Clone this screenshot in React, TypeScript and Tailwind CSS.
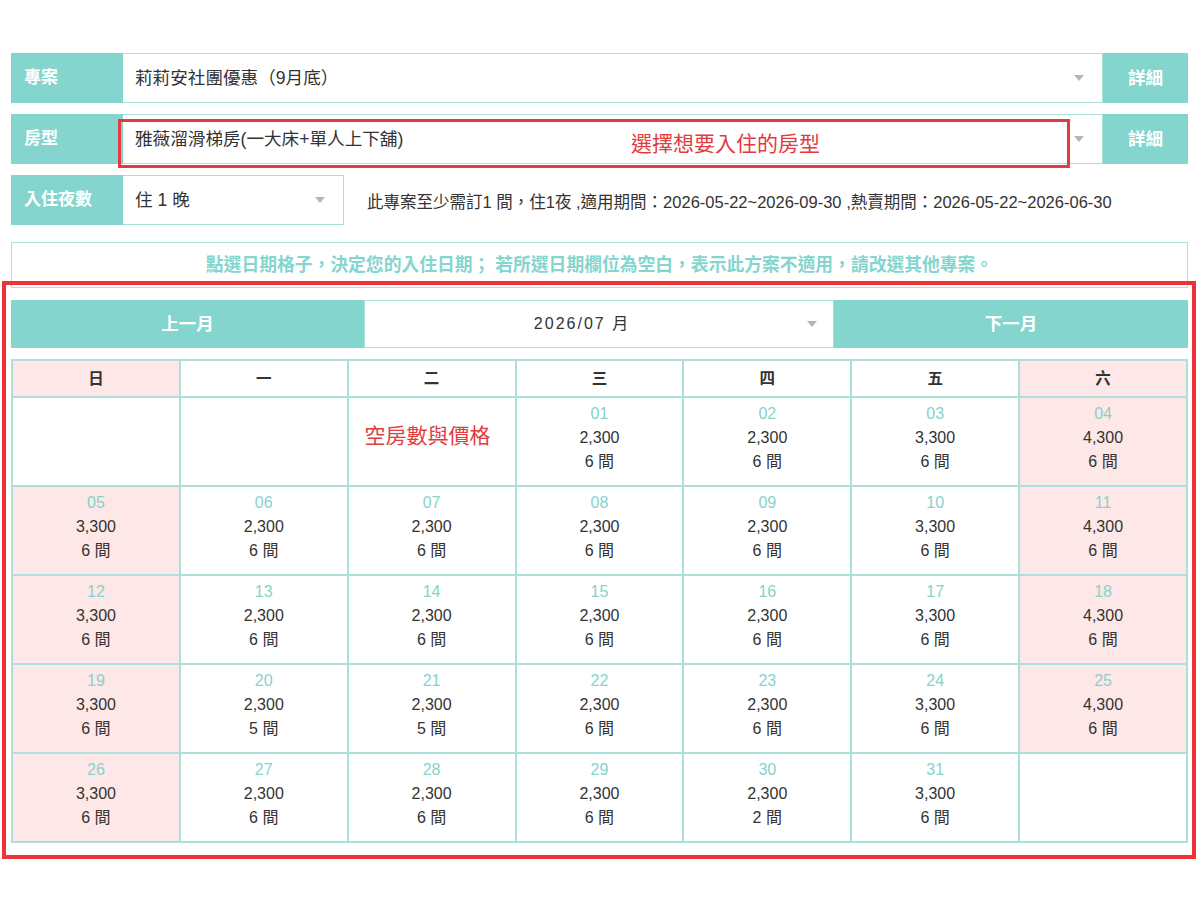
import React from 'react';

const font = { fontFamily: '"Liberation Sans", "Noto Sans CJK TC", sans-serif' };

interface Day {
  d: string;
  price: string;
  rooms: number;
}

const weeks: (Day | null | 'note')[][] = [
  [null, null, 'note', { d: '01', price: '2,300', rooms: 6 }, { d: '02', price: '2,300', rooms: 6 }, { d: '03', price: '3,300', rooms: 6 }, { d: '04', price: '4,300', rooms: 6 }],
  [{ d: '05', price: '3,300', rooms: 6 }, { d: '06', price: '2,300', rooms: 6 }, { d: '07', price: '2,300', rooms: 6 }, { d: '08', price: '2,300', rooms: 6 }, { d: '09', price: '2,300', rooms: 6 }, { d: '10', price: '3,300', rooms: 6 }, { d: '11', price: '4,300', rooms: 6 }],
  [{ d: '12', price: '3,300', rooms: 6 }, { d: '13', price: '2,300', rooms: 6 }, { d: '14', price: '2,300', rooms: 6 }, { d: '15', price: '2,300', rooms: 6 }, { d: '16', price: '2,300', rooms: 6 }, { d: '17', price: '3,300', rooms: 6 }, { d: '18', price: '4,300', rooms: 6 }],
  [{ d: '19', price: '3,300', rooms: 6 }, { d: '20', price: '2,300', rooms: 5 }, { d: '21', price: '2,300', rooms: 5 }, { d: '22', price: '2,300', rooms: 6 }, { d: '23', price: '2,300', rooms: 6 }, { d: '24', price: '3,300', rooms: 6 }, { d: '25', price: '4,300', rooms: 6 }],
  [{ d: '26', price: '3,300', rooms: 6 }, { d: '27', price: '2,300', rooms: 6 }, { d: '28', price: '2,300', rooms: 6 }, { d: '29', price: '2,300', rooms: 6 }, { d: '30', price: '2,300', rooms: 2 }, { d: '31', price: '3,300', rooms: 6 }, null],
];

const weekdays = ['日', '一', '二', '三', '四', '五', '六'];

const Arrow = () => (
  <span className="w-0 h-0 border-l-[5px] border-r-[5px] border-t-[6px] border-l-transparent border-r-transparent border-t-[#b5b5b5]" />
);

const SelectRow: React.FC<{ label: string; value: string; children?: React.ReactNode }> = ({ label, value, children }) => (
  <div className="relative flex h-[50px]">
    <div className="w-[112px] bg-[#84d5cd] text-white font-bold text-[17px] flex items-center pl-[13px]">{label}</div>
    <div className="flex-1 flex items-center justify-between bg-white border border-[#a8e0da] border-l-0 pl-[12px] pr-[18px] text-[17.6px] text-[#333]">
      <span>{value}</span>
      <Arrow />
    </div>
    <div className="w-[85px] bg-[#84d5cd] text-white font-bold text-[17.5px] flex items-center justify-center">詳細</div>
    {children}
  </div>
);

export default function App() {
  return (
    <div className="min-h-[900px] bg-white pt-[53px] pl-[11px] pr-[12px]" style={font}>
      <div className="flex flex-col gap-[11px]">
        <SelectRow label="專案" value="莉莉安社團優惠（9月底）" />
        <SelectRow label="房型" value="雅薇溜滑梯房(一大床+單人上下舖)">
          <div className="absolute left-[107px] top-[5px] w-[952px] h-[49px] border-[3px] border-[#e53a3f] flex items-center pl-[510px] text-[21px] text-[#e23b40] pointer-events-none">
            選擇想要入住的房型
          </div>
        </SelectRow>
        <div className="flex h-[50px] items-center">
          <div className="w-[112px] h-full bg-[#84d5cd] text-white font-bold text-[17px] flex items-center pl-[13px]">入住夜數</div>
          <div className="w-[221px] h-full flex items-center justify-between bg-white border border-[#a8e0da] border-l-0 pl-[12px] pr-[18px] text-[17.6px] text-[#333]">
            <span>住 1 晚</span>
            <Arrow />
          </div>
          <div className="ml-[23px] text-[16.5px] text-[#333] pt-[5px]">
            此專案至少需訂1 間，住1夜 ,適用期間：2026-05-22~2026-09-30 ,熱賣期間：2026-05-22~2026-06-30
          </div>
        </div>
      </div>

      <div className="mt-[17px] h-[46px] border border-[#a8e0da] flex items-center justify-center text-[17.8px] font-bold text-[#84d5cd]">
        點選日期格子，決定您的入住日期； 若所選日期欄位為空白，表示此方案不適用，請改選其他專案。
      </div>

      <div className="relative mt-[12px]">
        <div className="flex h-[48px]">
          <div className="w-[353px] bg-[#84d5cd] text-white font-bold text-[17.5px] flex items-center justify-center">上一月</div>
          <div className="flex-1 flex items-center bg-white border border-[#a8e0da] text-[16px] text-[#333]">
            <span className="flex-1 text-center tracking-[2px] pr-[8px]">2026/07 月</span>
            <span className="mr-[16px] flex"><Arrow /></span>
          </div>
          <div className="w-[354px] bg-[#84d5cd] text-white font-bold text-[17.5px] flex items-center justify-center">下一月</div>
        </div>

        <table className="mt-[11px] w-full border-collapse table-fixed">
          <thead>
            <tr className="h-[37px]">
              {weekdays.map((w, i) => (
                <th
                  key={w}
                  className={`border-2 border-[#addfdb] text-[15.5px] font-bold text-[#333] ${i === 0 || i === 6 ? 'bg-[#fde7e7]' : 'bg-white'}`}
                >
                  {w}
                </th>
              ))}
            </tr>
          </thead>
          <tbody>
            {weeks.map((week, r) => (
              <tr key={r} className="h-[89px]">
                {week.map((cell, i) => {
                  const pink = cell !== null && cell !== 'note' && (i === 0 || i === 6);
                  return (
                    <td
                      key={i}
                      className={`border-2 border-[#addfdb] align-top text-center ${pink ? 'bg-[#fde7e7]' : 'bg-white'}`}
                    >
                      {cell === 'note' && (
                        <div className="pt-[22px] pr-[8px] text-[21px] text-[#e23b40]">空房數與價格</div>
                      )}
                      {cell && cell !== 'note' && (
                        <div className="pt-[4px] text-[16px] leading-[24px]">
                          <div className="text-[#86d3cb]">{cell.d}</div>
                          <div className="text-[#333]">{cell.price}</div>
                          <div className="text-[#333]">{cell.rooms} 間</div>
                        </div>
                      )}
                    </td>
                  );
                })}
              </tr>
            ))}
          </tbody>
        </table>

        <div className="absolute -left-[9px] -right-[8px] -top-[19px] -bottom-[16px] border-4 border-[#ee3237] pointer-events-none" />
      </div>
    </div>
  );
}
